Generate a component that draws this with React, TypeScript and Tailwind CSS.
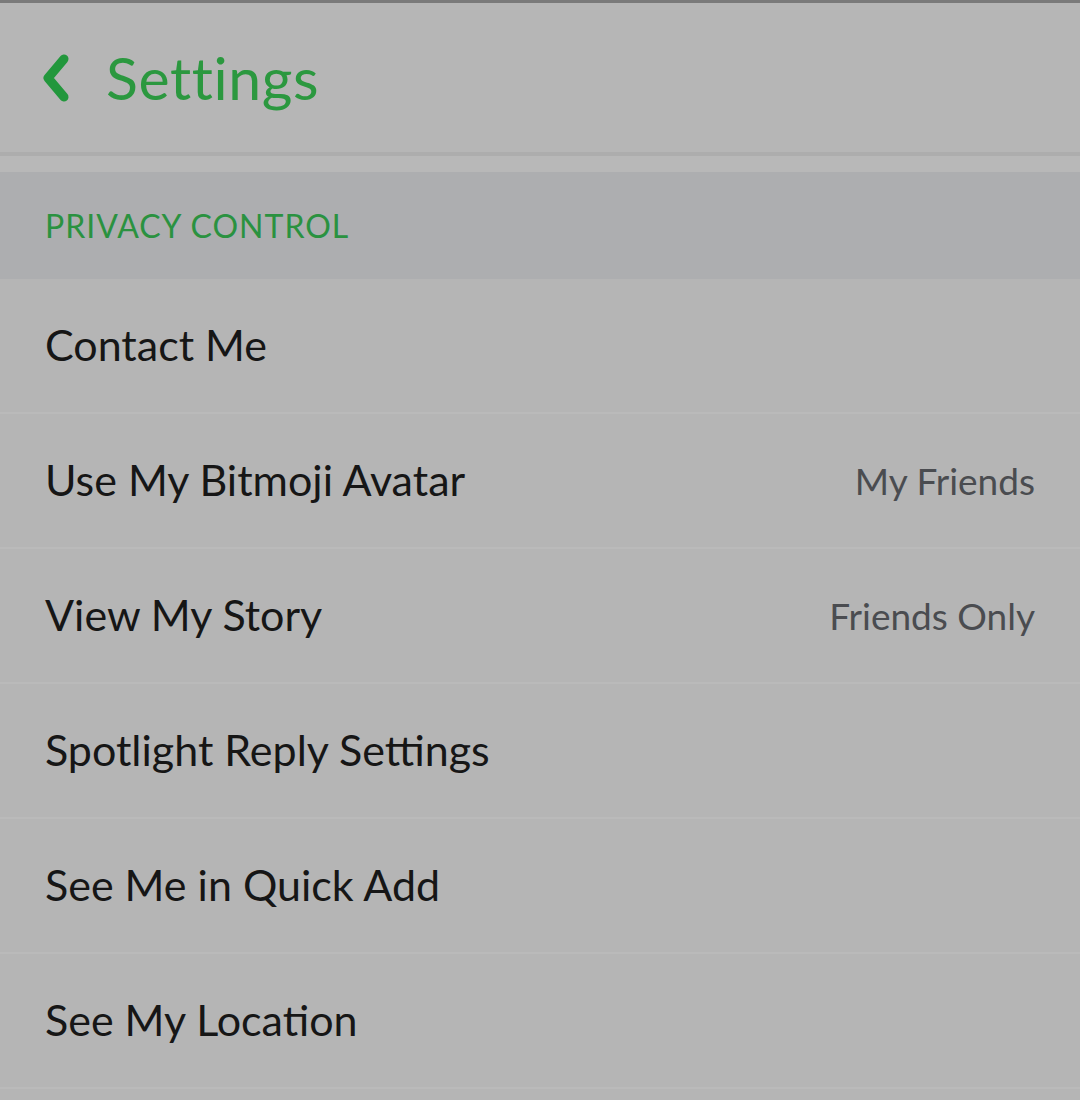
import React from "react";

const rows: { label: string; value?: string }[] = [
  { label: "Contact Me" },
  { label: "Use My Bitmoji Avatar", value: "My Friends" },
  { label: "View My Story", value: "Friends Only" },
  { label: "Spotlight Reply Settings" },
  { label: "See Me in Quick Add" },
  { label: "See My Location" },
];

export default function App() {
  return (
    <div
      className="w-[1080px] h-[1100px] overflow-hidden bg-[#b5b5b5] border-t-[3px] border-[#7a7a7a] flex flex-col"
      style={{ fontFamily: "Lato, 'Noto Sans', sans-serif" }}
    >
      <div className="h-[149px] flex items-center pl-[39px] pt-[2px] bg-[#b6b6b6]">
        <svg width="34" height="52" viewBox="0 0 34 52" className="mr-[33px] -mt-[2px]">
          <path
            d="M25 7 L9 26 L25 45"
            fill="none"
            stroke="#22973c"
            strokeWidth="9"
            strokeLinecap="round"
            strokeLinejoin="round"
          />
        </svg>
        <span className="text-[59px] text-[#2b983f] tracking-[0.6px]">Settings</span>
      </div>
      <div className="h-[4px] bg-[#adadad]" />
      <div className="h-[16px] bg-[#b8b8b8]" />
      <div className="h-[107px] bg-[#adaeb0] flex items-center pl-[45px]">
        <span className="text-[32px] text-[#2a9240] tracking-[1px]">PRIVACY CONTROL</span>
      </div>
      {rows.map((r) => (
        <div
          key={r.label}
          className="h-[135px] shrink-0 flex items-center justify-between pl-[45px] pr-[45px] border-b-2 border-[#bababa]"
        >
          <span className="text-[43px] text-[#161616]">{r.label}</span>
          {r.value && <span className="text-[37px] text-[#4a4c50]">{r.value}</span>}
        </div>
      ))}
    </div>
  );
}
